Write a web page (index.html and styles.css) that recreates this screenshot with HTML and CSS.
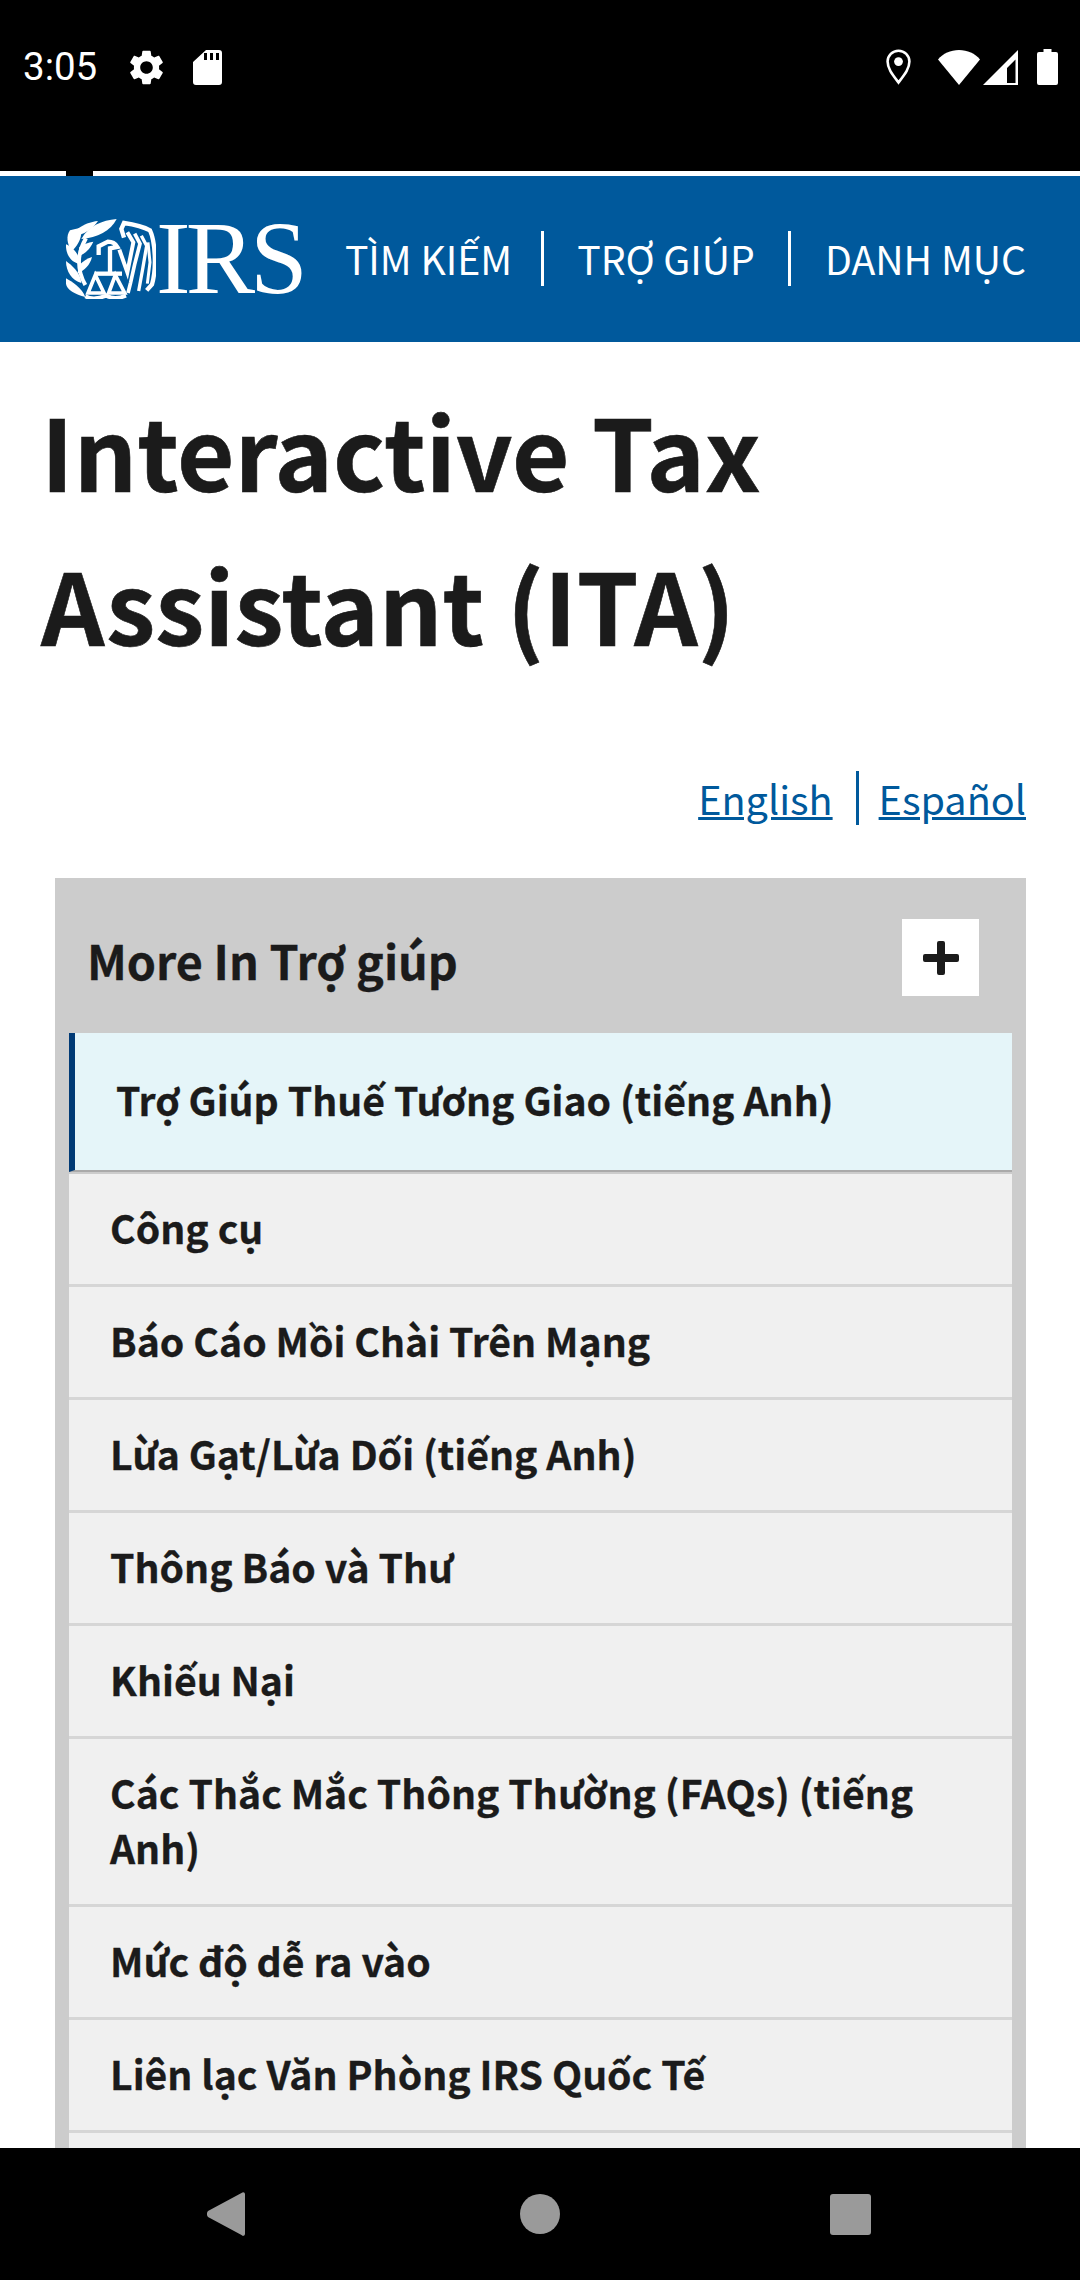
FILE: index.html
```html
<!DOCTYPE html>
<html lang="vi">
<head>
<meta charset="utf-8">
<title>Interactive Tax Assistant (ITA)</title>
<link rel="stylesheet" href="styles.css">
</head>
<body>
<div class="phone">
  <div class="status">
    <div class="status-left">
      <span class="time">3:05</span>
      <svg class="ic-gear" viewBox="2.6 2 18.8 20"><path fill="#fff" d="M19.14 12.94c.04-.3.06-.61.06-.94 0-.32-.02-.64-.07-.94l2.03-1.58c.18-.14.23-.41.12-.61l-1.92-3.32c-.12-.22-.37-.29-.59-.22l-2.39.96c-.5-.38-1.03-.7-1.62-.94l-.36-2.54c-.04-.24-.24-.41-.48-.41h-3.84c-.24 0-.43.17-.47.41l-.36 2.54c-.59.24-1.13.57-1.62.94l-2.39-.96c-.22-.08-.47 0-.59.22L2.74 8.87c-.12.21-.08.47.12.61l2.03 1.58c-.05.3-.09.63-.09.94s.02.64.07.94l-2.03 1.58c-.18.14-.23.41-.12.61l1.92 3.32c.12.22.37.29.59.22l2.39-.96c.5.38 1.03.7 1.62.94l.36 2.54c.05.24.24.41.48.41h3.84c.24 0 .44-.17.47-.41l.36-2.54c.59-.24 1.13-.56 1.62-.94l2.39.96c.22.08.47 0 .59-.22l1.92-3.32c.12-.22.07-.47-.12-.61l-2.01-1.58zM12 15.6c-1.98 0-3.6-1.62-3.6-3.6s1.62-3.6 3.6-3.6 3.6 1.62 3.6 3.6-1.62 3.6-3.6 3.6z"/></svg>
      <svg class="ic-sd" viewBox="0 0 29 35"><path fill="#fff" fill-rule="evenodd" d="M13 0h13a3 3 0 0 1 3 3v29a3 3 0 0 1-3 3H3a3 3 0 0 1-3-3V12zM11 3v7h3V3zM17 3v7h3V3zM23 3v7h3V3z"/></svg>
    </div>
    <div class="status-right">
      <svg class="ic-loc" viewBox="0 0 25 36"><path fill="none" stroke="#fff" stroke-width="2.6" d="M12.5 33.5C6 25 1.6 19.5 1.6 12.6A10.9 10.9 0 0 1 23.4 12.6C23.4 19.5 19 25 12.5 33.5z"/><circle cx="12.5" cy="12.6" r="4.4" fill="#fff"/></svg>
      <svg class="ic-wifi" viewBox="0 0 42 35"><path fill="#fff" d="M21 35 0 9.5C5 3.5 12.5 0 21 0s16 3.5 21 9.5z"/></svg>
      <svg class="ic-signal" viewBox="0 0 35 35"><path fill="#fff" fill-rule="evenodd" d="M0 35 35 0v35zM24 33h8.500V9.500l-8.500 8.500z"/></svg>
      <svg class="ic-batt" viewBox="0 0 21 36"><path fill="#fff" d="M6.500 0h8v3H19a2 2 0 0 1 2 2v29a2 2 0 0 1-2 2H2a2 2 0 0 1-2-2V5a2 2 0 0 1 2-2h4.500z"/></svg>
    </div>
  </div>
  <div class="web">
    <div class="topline"><span class="notch"></span></div>
    <header class="site-head">
      <a class="logo">
        <svg class="emblem" viewBox="48 42 270 240" aria-hidden="true">
          <g fill="#fff">
            <path d="M94 102C116 62 156 46 200 42 182 78 142 98 94 102z"/>
            <path d="M80 74C100 58 122 50 144 48 130 70 108 84 88 90z"/>
            <path d="M92 68C98 92 88 116 66 138 50 118 48 92 60 76z"/>
            <path d="M48 118C68 126 90 150 92 178 64 174 46 148 48 118z"/>
            <path d="M88 126C100 118 114 112 130 110 120 132 106 146 84 154z"/>
            <path d="M48 168C64 180 92 202 94 234 66 226 48 200 48 168z"/>
            <path d="M88 180C100 168 112 160 126 156 120 180 104 196 82 206z"/>
            <path d="M48 220C66 230 96 250 106 276 76 268 50 254 48 236z"/>
          </g>
          <g fill="none" stroke="#fff" stroke-linejoin="miter">
            <path stroke-width="12" d="M108 100C84 140 78 190 106 240"/>
            <path stroke-width="13" d="M146 150V124L174 110C186 110 196 116 202 126L180 130V206"/>
            <path stroke-width="13" d="M134 206H216"/>
            <path stroke-width="11" d="M114 264 136 210 162 264zM176 264 196 210 224 264z"/>
            <path stroke-width="12" d="M106 274C130 286 150 278 170 272 190 284 208 280 228 272"/>
            <path stroke-width="13" d="M222 98 214 72 222 54C250 58 282 66 300 76 316 110 320 190 306 238L290 256"/>
            <path stroke-width="12" d="M208 134 232 202 250 112 232 82"/>
            <path stroke-width="11" d="M254 86 270 116 254 178 242 232 234 264"/>
            <path stroke-width="10" d="M274 92 290 122 278 192 266 258"/>
            <path stroke-width="9" d="M294 112 300 172 292 236"/>
          </g>
        </svg>
        <span class="wordmark">IRS</span>
      </a>
      <nav class="main-nav">
        <a class="nav-link">TÌM KIẾM</a>
        <a class="nav-link">TRỢ GIÚP</a>
        <a class="nav-link">DANH MỤC</a>
      </nav>
    </header>
    <main class="content">
      <h1 class="title">Interactive Tax Assistant (ITA)</h1>
      <div class="langs">
        <a class="lang">English</a>
        <a class="lang">Español</a>
      </div>
      <section class="panel">
        <div class="panel-head">
          <h2 class="panel-title">More In Trợ giúp</h2>
          <span class="plus"><svg viewBox="0 0 36 34" class="plus-ic"><path fill="#1b1b1b" d="M14 2a2 2 0 0 1 2-2h4a2 2 0 0 1 2 2v11h12a2 2 0 0 1 2 2v4a2 2 0 0 1-2 2H22v11a2 2 0 0 1-2 2h-4a2 2 0 0 1-2-2V21H2a2 2 0 0 1-2-2v-4a2 2 0 0 1 2-2h12z"/></svg></span>
        </div>
        <ul class="menu">
          <li class="menu-item active">Trợ Giúp Thuế Tương Giao (tiếng Anh)</li>
          <li class="menu-item">Công cụ</li>
          <li class="menu-item">Báo Cáo Mồi Chài Trên Mạng</li>
          <li class="menu-item">Lừa Gạt/Lừa Dối (tiếng Anh)</li>
          <li class="menu-item">Thông Báo và Thư</li>
          <li class="menu-item">Khiếu Nại</li>
          <li class="menu-item">Các Thắc Mắc Thông Thường (FAQs) (tiếng Anh)</li>
          <li class="menu-item">Mức độ dễ ra vào</li>
          <li class="menu-item">Liên lạc Văn Phòng IRS Quốc Tế</li>
          <li class="menu-item menu-item-blank"></li>
        </ul>
      </section>
    </main>
  </div>
  <div class="navbar">
    <svg class="nav-back" viewBox="0 0 38 44"><path fill="#9a9a9a" d="M38 2.500V41.500C38 44 36 44.500 34.500 43L1 25C-.5 23-.5 21 1 19L34.500 1C36-.5 38 0 38 2.500z"/></svg>
    <span class="nav-home"></span>
    <span class="nav-recent"></span>
  </div>
</div>
</body>
</html>
```
FILE: styles.css
```css
* { box-sizing: border-box; }
html, body { margin: 0; padding: 0; }
body { width: 1080px; height: 2280px; overflow: hidden; background: #000; font-family: "Noto Sans CJK SC", "Noto Sans", sans-serif; color: #1b1b1b; }
.phone { width: 1080px; height: 2280px; display: flex; flex-direction: column; }
.status { height: 171px; flex: none; background: #000; display: flex; justify-content: space-between; padding: 49px 22px 0 23px; }
.status-left, .status-right { display: flex; align-items: flex-start; }
.time { font-family: Roboto, sans-serif; font-size: 38.500px; line-height: 36px; color: #fff; width: 107px; }
.ic-gear { width: 33px; height: 35px; margin-top: 1px; }
.ic-sd { width: 29px; height: 35px; margin-left: 30px; margin-top: 1px; }
.ic-loc { width: 25px; height: 36px; }
.ic-wifi { width: 42px; height: 35px; margin-left: 27px; margin-top: 1px; }
.ic-signal { width: 35px; height: 35px; margin-left: 3px; margin-top: 1px; }
.ic-batt { width: 21px; height: 36px; margin-left: 19px; }
.web { flex: 1; min-height: 0; overflow: hidden; background: #fff; }
.topline { height: 5px; background: #fff; padding-left: 66px; }
.notch { display: block; width: 27px; height: 5px; background: #000; }
.site-head { height: 166px; background: #00599c; display: flex; align-items: center; justify-content: space-between; padding: 0 54px 0 66px; }
.logo { display: flex; align-items: center; flex: none; }
.emblem { width: 90px; height: 80px; flex: none; }
.wordmark { font-family: "Liberation Serif", serif; font-size: 104px; line-height: 80px; color: #fff; letter-spacing: -5px; margin-top: -2px; }
.main-nav { display: flex; align-items: center; margin-top: -1px; flex: none; }
.nav-link { font-size: 39.200px; line-height: 55px; color: #fff; padding: 0 33px; border-left: 3px solid #fff; font-weight: 400; white-space: nowrap; }
.nav-link:first-child { border-left: 0; padding: 0 29px 0 0; }
.nav-link:last-child { padding: 0 0 0 34px; }
.content { padding: 0 54px 0 41px; }
.title { margin: 30px 0 0; font-size: 99px; line-height: 154px; font-weight: 700; color: #1b1b1b; width: 800px; -webkit-text-stroke: 0.6px #1b1b1b; }
.langs { display: flex; justify-content: flex-end; margin-top: 91px; }
.lang { font-size: 39.600px; line-height: 54px; color: #00599c; text-decoration: underline; padding-right: 23px; }
.lang + .lang { border-left: 3px solid #00599c; padding: 0 0 0 20px; }
.panel { margin: 53px 0 0 14px; background: #ccc; padding: 0 14px; }
.panel-head { height: 155px; display: flex; justify-content: space-between; padding: 41px 33px 0 20px; margin: 0 -14px 0 -6px; }
.panel-title { margin: 0 0 0 4px; font-size: 46.700px; line-height: 72px; padding-top: 5px; font-weight: 700; -webkit-text-stroke: 0.3px #1b1b1b; }
.plus { width: 77px; height: 77px; background: #fff; display: flex; align-items: center; justify-content: center; margin-right: 14px; }
.plus-ic { width: 36px; height: 34px; }
.menu { list-style: none; margin: 0; padding: 0; }
.menu-item { background: #f0f0f0; border-bottom: 3px solid #d6d6d6; padding: 26px 41px 29px; font-size: 39.200px; line-height: 55px; font-weight: 700; color: #1b1b1b; -webkit-text-stroke: 0.3px #1b1b1b; }
.menu-item-blank { height: 113px; }
.menu-item.active { background: #e5f5f9; border-left: 6px solid #003a75; border-bottom: 2px solid #aaa; margin-bottom: 2px; padding: 39px 41px 40px; height: 139px; }
.navbar { height: 132px; flex: none; background: #000; position: relative; display: flex; align-items: center; }
.nav-back { width: 38px; height: 44px; position: absolute; left: 207px; top: 44px; }
.nav-home { position: absolute; left: 520px; top: 46px; width: 40px; height: 40px; border-radius: 50%; background: #9a9a9a; }
.nav-recent { position: absolute; left: 830px; top: 46px; width: 41px; height: 41px; border-radius: 3px; background: #9a9a9a; }
```
